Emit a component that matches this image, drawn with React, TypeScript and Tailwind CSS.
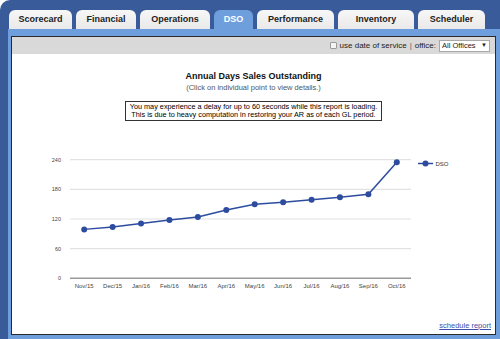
import React from 'react';

const tabs = [
  { label: 'Scorecard', w: 'w-[63px]' },
  { label: 'Financial', w: 'w-[60px]' },
  { label: 'Operations', w: 'w-[70px]' },
  { label: 'DSO', w: 'w-[39px]', active: true },
  { label: 'Performance', w: 'w-[77px]' },
  { label: 'Inventory', w: 'w-[76px]' },
  { label: 'Scheduler', w: 'w-[67px]' },
];

const months = ['Nov/15', 'Dec/15', 'Jan/16', 'Feb/16', 'Mar/16', 'Apr/16', 'May/16', 'Jun/16', 'Jul/16', 'Aug/16', 'Sep/16', 'Oct/16'];
const dso = [99, 104, 111, 118, 124, 138, 150, 154, 159, 164, 170, 235];

// chart geometry in page coordinates
const X0 = 70;
const X1 = 411;
const Y0 = 279.3;
const PER60 = 29.65;
const step = (X1 - X0) / months.length;
const px = (i: number) => X0 + step * (i + 0.5);
const py = (v: number) => Y0 - (v / 60) * PER60;

function Chart() {
  const pts = dso.map((v, i) => `${px(i)},${py(v)}`).join(' ');
  return (
    <svg width={484} height={145} className="block mt-[28px]" style={{ fontFamily: '"Liberation Sans", Arial, sans-serif' }}>
      <g transform="translate(-12,-150)">
        {[60, 120, 180, 240].map(v => (
          <line key={v} x1={X0} x2={X1} y1={py(v)} y2={py(v)} stroke="#e2e2e2" strokeWidth={1.2} />
        ))}
        <line x1={X0} x2={X1} y1={Y0} y2={Y0} stroke="#9a9a9a" strokeWidth={1.5} />
        {[0, 60, 120, 180, 240].map(v => (
          <text key={v} x={61} y={py(v) + 2} fontSize={5.5} fill="#444" textAnchor="end">{v}</text>
        ))}
        {months.map((m, i) => (
          <text key={m} x={px(i)} y={289} fontSize={6} fill="#444" textAnchor="middle">{m}</text>
        ))}
        <polyline points={pts} fill="none" stroke="#2e4c9f" strokeWidth={1.5} />
        {dso.map((v, i) => (
          <circle key={i} cx={px(i)} cy={py(v)} r={3} fill="#2e4c9f" />
        ))}
        <line x1={418} x2={433} y1={164.5} y2={164.5} stroke="#2e4c9f" strokeWidth={1.5} />
        <circle cx={425.5} cy={164.5} r={3} fill="#2e4c9f" />
        <text x={435.5} y={166.7} fontSize={6} fill="#333">DSO</text>
      </g>
    </svg>
  );
}

export default function App() {
  return (
    <div className="w-[500px] h-[339px] bg-white overflow-hidden" style={{ fontFamily: '"Liberation Sans", Arial, sans-serif' }}>
      <div className="h-full bg-[#3a5b9a] rounded-tl-[10px] flex flex-col">
        <div className="h-[29px] flex items-end gap-[4px] pl-[9px] shrink-0">
          {tabs.map(t => (
            <div
              key={t.label}
              className={`${t.w} h-[19px] rounded-t-[6px] flex items-center justify-center text-[9px] font-bold ${
                t.active ? 'bg-[#6e9fdc] text-white' : 'bg-gradient-to-b from-[#f7f7f7] to-[#e9e9e9] text-[#222]'
              }`}
            >
              {t.label}
            </div>
          ))}
        </div>

        <div className="flex-1 ml-[8px] bg-[#6e9fdc] pt-[7px] pl-[3px] pr-[4px] pb-[4px] min-h-0">
          <div className="h-full border border-[#2a2a2a] bg-white flex flex-col">
            <div className="h-[17px] bg-[#d9d9d9] flex items-center justify-end pr-[5px] text-[8px] text-[#222] shrink-0">
              <span className="w-[7px] h-[7px] border border-[#9a9a9a] bg-[#f4f4f4] rounded-[1px] mr-[3px]" />
              <span>use date of service</span>
              <span className="mx-[3px] text-[#555]">|</span>
              <span>office:</span>
              <span className="ml-[3px] h-[12px] w-[51px] bg-white border border-[#a8a8a8] flex items-center justify-between px-[2px] text-[7.5px]">
                <span>All Offices</span>
                <span className="text-[6px]">▼</span>
              </span>
            </div>

            <div className="flex-1 flex flex-col items-center min-h-0">
              <div className="mt-[17px] text-[9px] leading-[11px] font-bold text-[#111]">Annual Days Sales Outstanding</div>
              <div className="mt-[1px] text-[7.5px] leading-[9px] text-[#555]">(Click on individual point to view details.)</div>
              <div className="mt-[9px] border-[1.5px] border-[#333] px-[4px] py-[1px] text-[7.3px] leading-[8px] text-black text-center">
                <div>You may experience a delay for up to 60 seconds while this report is loading.</div>
                <div>This is due to heavy computation in restoring your AR as of each GL period.</div>
              </div>
              <Chart />
              <div className="mt-auto self-end pr-[4px] pb-[4px] text-[7.5px] leading-[9px] text-[#3b50a8] underline">
                schedule report
              </div>
            </div>
          </div>
        </div>
      </div>
    </div>
  );
}
